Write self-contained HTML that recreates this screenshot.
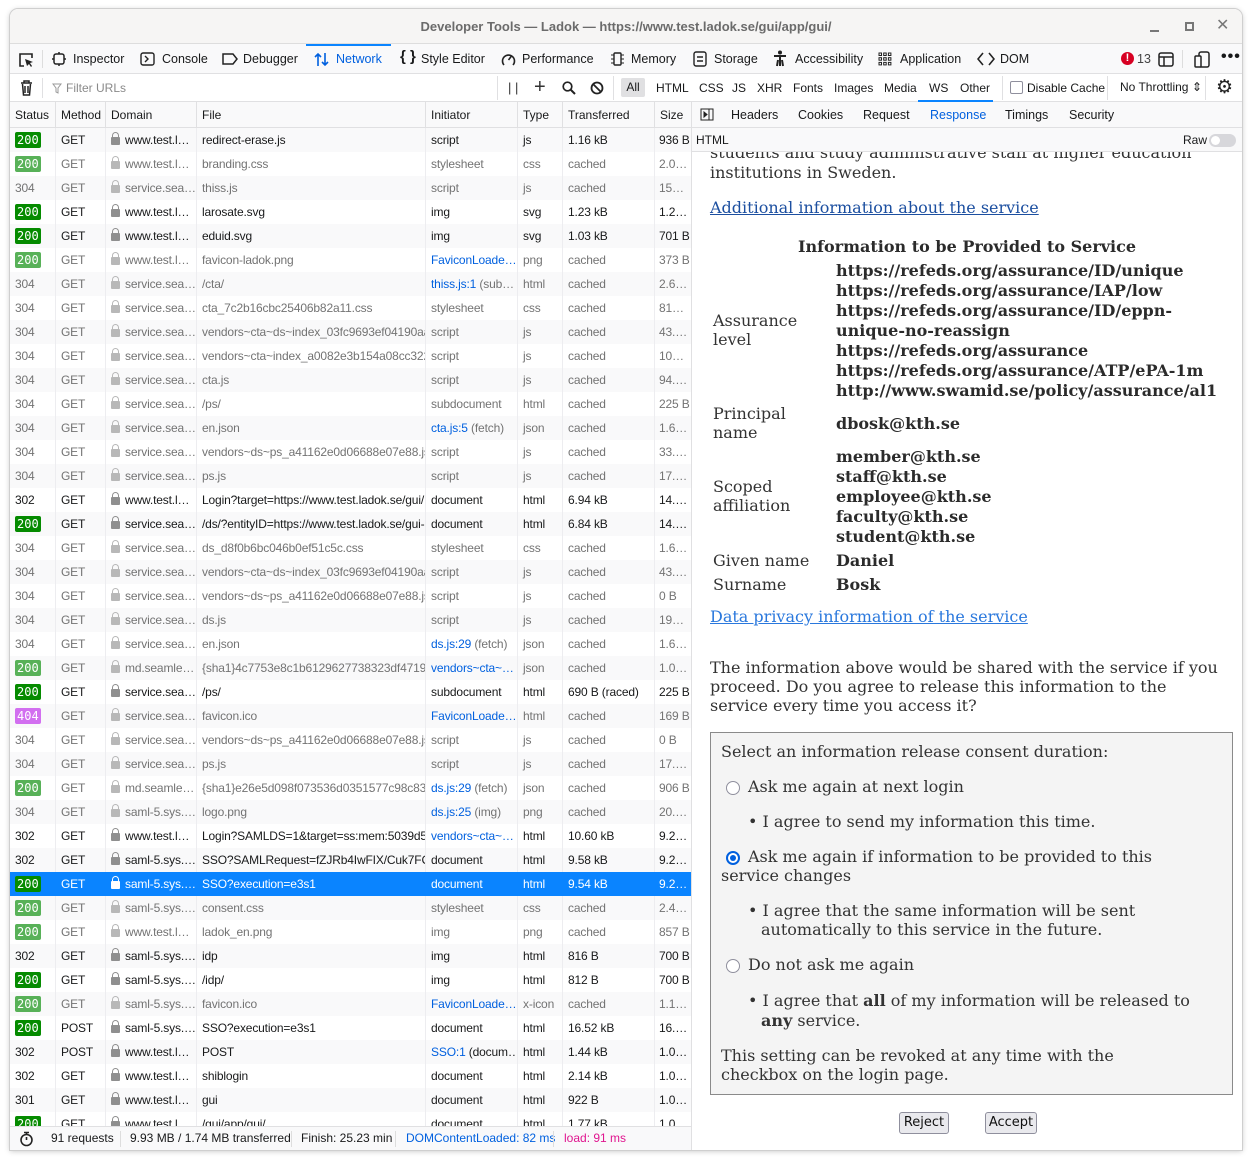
<!DOCTYPE html>
<html><head><meta charset="utf-8"><style>
*{box-sizing:border-box;margin:0;padding:0}
body{width:1252px;height:1160px;background:#fff;position:relative;overflow:hidden;font:12px "Liberation Sans","DejaVu Sans",sans-serif;color:#18191a}
.win{position:absolute;left:10px;top:9px;width:1232px;height:1141px;border-radius:8px 8px 0 0;overflow:hidden;box-shadow:0 0 0 1px #cfcfcf,0 1px 6px rgba(0,0,0,.25);background:#fff}
.a{position:absolute;white-space:nowrap}
.title{left:0;top:0;width:1232px;height:35px;background:#f6f5f4;border-bottom:1px solid #ddd;text-align:center;line-height:35px;font-weight:bold;font-size:13px;color:#6b6b6b}
.tb{left:0;top:35px;width:1232px;height:30px;background:#f9f9fa;border-bottom:1px solid #e0e0e2}
.fr{left:0;top:65px;width:1232px;height:28px;background:#fff;border-bottom:1px solid #e0e0e2}
.lbl{font-size:12.5px;color:#18191a;line-height:14px}
.ic{position:absolute}
.hdr{left:0;top:93px;width:681px;height:26px;background:#f9f9fa;border-bottom:1px solid #e0e0e2}
.hdr span{position:absolute;top:0;height:26px;line-height:26px;padding-left:5px;border-right:1px solid #e0e0e2}
.rows{position:absolute;left:0;top:119px;width:681px;height:998px;overflow:hidden;letter-spacing:-0.15px}
.r{height:24px;line-height:24px;display:flex;color:#18191a}
.r:nth-child(odd){background:#f9f9fa}
.r>span{overflow:hidden;white-space:nowrap;padding-left:5px;border-right:1px solid #ededf0;flex:none}
.r>span:nth-child(1){width:46px}.r>span:nth-child(2){width:50px}.r>span:nth-child(3){width:91px}.r>span:nth-child(4){width:229px}.r>span:nth-child(5){width:92px}.r>span:nth-child(6){width:45px}.r>span:nth-child(7){width:92px}.r>span:nth-child(8){width:36px;border:0;padding-left:4px}
.f{color:#737373}
.st{font:12px "DejaVu Sans Mono",monospace;padding:1px 2px;border-radius:2px;letter-spacing:0}
.g{background:#058b00;color:#fff}
.f .g{background:#58b158}
.p{background:#d26ff0;color:#fff}
.lk{display:inline-block;width:9px;height:8px;background:#8f8f8f;border-radius:1px;position:relative;margin-right:5px;vertical-align:-1px}
.lk:before{content:"";position:absolute;left:1px;top:-5px;width:7px;height:7px;border:1.5px solid #8f8f8f;border-bottom:0;border-radius:4px 4px 0 0;box-sizing:border-box;background:none}
.f .lk{background:#b8b8b8}.f .lk:before{border-color:#b8b8b8}
.bl{color:#0060df}
.sel{background:#0a84ff!important;color:#fff}
.sel>span{border-color:#0a84ff}
.sel .lk{background:#fff}.sel .lk:before{border-color:#fff}
.sb{left:0;top:1117px;width:681px;height:24px;background:#f9f9fa;border-top:1px solid #e0e0e2;line-height:23px;color:#18191a}
.rp{position:absolute;left:681px;top:93px;width:551px;height:1048px;border-left:1px solid #e0e0e2;background:#fff}
.rt{left:0;top:0;width:551px;height:26px;background:#f9f9fa;border-bottom:1px solid #e0e0e2;line-height:26px;font-size:12.5px}
.rh{left:0;top:26px;width:551px;height:24px;background:#f9f9fa;border-bottom:1px solid #e0e0e2;line-height:24px}
.ct{position:absolute;left:0;top:50px;width:551px;height:998px;overflow:hidden}
.l{position:absolute;white-space:nowrap;line-height:20px;font:16px "DejaVu Serif",serif;color:#333}
.bd{font-weight:bold;color:#2b2b2b}
.lnk{color:#1c4fa0;text-decoration:underline}
.box{position:absolute;left:18px;top:580px;width:523px;height:363px;background:#f4f4f4;border:1px solid #8a8a8a}
.rad{position:absolute;width:14px;height:14px;border:1.5px solid #8f8f9d;border-radius:50%;background:#fff}
.rad.on{border:2px solid #0060df}
.rad.on:after{content:"";position:absolute;left:2px;top:2px;width:6px;height:6px;border-radius:50%;background:#0060df}
.btn{position:absolute;height:22px;border:1px solid #8f8f9d;border-radius:3px;background:#e9e9ed;font:13px "DejaVu Sans",sans-serif;line-height:20px;text-align:center;color:#111}
</style></head><body>
<div class="win">
<div class="a title">Developer Tools — Ladok — https://www.test.ladok.se/gui/app/gui/</div>
<div class="a" style="left:1140px;top:21px;width:9px;height:2px;background:#777"></div>
<div class="a" style="left:1175px;top:13px;width:9px;height:9px;border:2px solid #777"></div>
<div class="a" style="left:1206px;top:6px;font-size:16px;color:#777">✕</div>

<div class="a tb">
<svg class="ic" style="left:8px;top:8px" width="16" height="16" viewBox="0 0 16 16"><path d="M6 14H2V2h12v4" fill="none" stroke="#222" stroke-width="1.6"/><path d="M7 7l8 3-3 1 2 3-1 1-2-3-2 2z" fill="#222"/></svg>
<div class="a" style="left:32px;top:6px;width:1px;height:18px;background:#ddd"></div>
<svg class="ic" style="left:42px;top:8px" width="14" height="14"><rect x="2" y="2" width="10" height="10" rx="2" fill="none" stroke="#222" stroke-width="1.5"/><path d="M7 0v2M7 12v2M0 7h2M12 7h2" stroke="#222" stroke-width="1.5"/></svg>
<div class="a lbl" style="left:63px;top:8px">Inspector</div>
<svg class="ic" style="left:130px;top:8px" width="15" height="14"><rect x="1" y="1" width="13" height="12" rx="2" fill="none" stroke="#222" stroke-width="1.4"/><path d="M5 4l3 3-3 3" fill="none" stroke="#222" stroke-width="1.4"/></svg>
<div class="a lbl" style="left:152px;top:8px">Console</div>
<svg class="ic" style="left:212px;top:8px" width="16" height="14"><path d="M1 2h10l4 5-4 5H1z" fill="none" stroke="#222" stroke-width="1.5"/></svg>
<div class="a lbl" style="left:233px;top:8px">Debugger</div>
<div class="a" style="left:296px;top:0;width:85px;height:2px;background:#0a84ff"></div>
<svg class="ic" style="left:304px;top:8px" width="16" height="15"><path d="M4 14V2M1 5l3-3 3 3M11 1v12M8 10l3 3 3-3" fill="none" stroke="#0060df" stroke-width="1.6"/></svg>
<div class="a lbl" style="left:326px;top:8px;color:#0060df">Network</div>
<div class="a lbl" style="left:390px;top:6px;font-size:15px;font-weight:bold">{ }</div>
<div class="a lbl" style="left:411px;top:8px">Style Editor</div>
<svg class="ic" style="left:491px;top:8px" width="15" height="14"><path d="M3 13A6 6 0 1 1 12 13" fill="none" stroke="#222" stroke-width="1.6"/><path d="M7.5 8l3-4" stroke="#222" stroke-width="1.6"/></svg>
<div class="a lbl" style="left:512px;top:8px">Performance</div>
<svg class="ic" style="left:600px;top:7px" width="15" height="16"><rect x="4" y="2" width="7" height="12" rx="1" fill="none" stroke="#222" stroke-width="1.4"/><path d="M1 4h3M1 8h3M1 12h3M11 4h3M11 8h3M11 12h3" stroke="#222"/></svg>
<div class="a lbl" style="left:621px;top:8px">Memory</div>
<svg class="ic" style="left:683px;top:7px" width="14" height="16"><rect x="1" y="1" width="12" height="14" rx="2" fill="none" stroke="#222" stroke-width="1.4"/><path d="M4 6h6M4 10h6" stroke="#222" stroke-width="1.4"/></svg>
<div class="a lbl" style="left:704px;top:8px">Storage</div>
<svg class="ic" style="left:763px;top:6px" width="14" height="17"><circle cx="7" cy="2.5" r="2" fill="#222"/><path d="M1 6h12M7 6v10M4 16l1-6M10 16l-1-6" stroke="#222" stroke-width="2"/></svg>
<div class="a lbl" style="left:785px;top:8px">Accessibility</div>
<svg class="ic" style="left:868px;top:8px" width="14" height="14" fill="none" stroke="#222"><rect x="1" y="1" width="2.5" height="2.5"/><rect x="5.7" y="1" width="2.5" height="2.5"/><rect x="10.4" y="1" width="2.5" height="2.5"/><rect x="1" y="5.7" width="2.5" height="2.5"/><rect x="5.7" y="5.7" width="2.5" height="2.5"/><rect x="10.4" y="5.7" width="2.5" height="2.5"/><rect x="1" y="10.4" width="2.5" height="2.5"/><rect x="5.7" y="10.4" width="2.5" height="2.5"/><rect x="10.4" y="10.4" width="2.5" height="2.5"/></svg>
<div class="a lbl" style="left:890px;top:8px">Application</div>
<svg class="ic" style="left:967px;top:7px" width="18" height="16"><path d="M6 2L1 8l5 6M12 2l5 6-5 6" fill="none" stroke="#222" stroke-width="1.6"/></svg>
<div class="a lbl" style="left:990px;top:8px">DOM</div>
<div class="a" style="left:1111px;top:8px;width:13px;height:13px;border-radius:50%;background:#d70022;color:#fff;font-size:11px;font-weight:bold;text-align:center;line-height:13px">!</div>
<div class="a lbl" style="left:1127px;top:8px;color:#444">13</div>
<svg class="ic" style="left:1148px;top:8px" width="16" height="15"><rect x="1" y="1" width="14" height="13" rx="2" fill="none" stroke="#222" stroke-width="1.5"/><path d="M1 5h14M6 5v9" stroke="#222" stroke-width="1.5"/></svg>
<div class="a" style="left:1172px;top:6px;width:1px;height:18px;background:#ddd"></div>
<svg class="ic" style="left:1184px;top:7px" width="16" height="17"><rect x="5" y="1" width="10" height="15" rx="2" fill="none" stroke="#222" stroke-width="1.5"/><rect x="1" y="5" width="6" height="11" rx="1" fill="#f9f9fa" stroke="#222" stroke-width="1.5"/></svg>
<div class="a" style="left:1211px;top:4px;font-size:16px;font-weight:bold;letter-spacing:1px">•••</div>
</div>

<div class="a fr">
<svg class="ic" style="left:10px;top:6px" width="13" height="16"><path d="M1 3h11M4 3V1h5v2M2.5 4l1 11h6l1-11M5 6v7M8 6v7" fill="none" stroke="#222" stroke-width="1.5"/></svg>
<div class="a" style="left:32px;top:4px;width:1px;height:20px;background:#e0e0e2"></div>
<svg class="ic" style="left:42px;top:9px" width="10" height="11"><path d="M1 1h8L6 5v5L4 9V5z" fill="none" stroke="#999"/></svg>
<div class="a" style="left:56px;top:7px;color:#8a8a8a">Filter URLs</div>
<div class="a" style="left:487px;top:2px;width:1px;height:24px;background:#e0e0e2"></div>
<div class="a" style="left:498px;top:6px;color:#333;font-size:13px">| |</div>
<div class="a" style="left:524px;top:2px;font-size:20px;color:#333">+</div>
<svg class="ic" style="left:552px;top:7px" width="14" height="14"><circle cx="5.5" cy="5.5" r="4.3" fill="none" stroke="#222" stroke-width="1.7"/><path d="M8.5 8.5L13 13" stroke="#222" stroke-width="2"/></svg>
<svg class="ic" style="left:580px;top:7px" width="14" height="14"><circle cx="7" cy="7" r="5.5" fill="none" stroke="#222" stroke-width="1.8"/><path d="M3 3l8 8" stroke="#222" stroke-width="1.8"/></svg>
<div class="a" style="left:603px;top:2px;width:1px;height:24px;background:#e0e0e2"></div>
<div class="a" style="left:611px;top:4px;width:24px;height:19px;background:#e0e0e2;border-radius:2px;text-align:center;line-height:19px">All</div>
<div class="a" style="left:646px;top:7px">HTML</div>
<div class="a" style="left:689px;top:7px">CSS</div>
<div class="a" style="left:722px;top:7px">JS</div>
<div class="a" style="left:747px;top:7px">XHR</div>
<div class="a" style="left:783px;top:7px">Fonts</div>
<div class="a" style="left:824px;top:7px">Images</div>
<div class="a" style="left:874px;top:7px">Media</div>
<div class="a" style="left:919px;top:7px">WS</div>
<div class="a" style="left:950px;top:7px">Other</div>
<div class="a" style="left:908px;top:26px;width:75px;height:2px;background:#0a84ff"></div>
<div class="a" style="left:992px;top:2px;width:1px;height:24px;background:#e0e0e2"></div>
<div class="a" style="left:1000px;top:7px;width:13px;height:13px;border:1px solid #8f8f9d;border-radius:2px;background:#fff"></div>
<div class="a" style="left:1017px;top:7px">Disable Cache</div>
<div class="a" style="left:1097px;top:2px;width:1px;height:24px;background:#e0e0e2"></div>
<div class="a" style="left:1110px;top:6px">No Throttling ⇕</div>
<div class="a" style="left:1195px;top:2px;width:1px;height:24px;background:#e0e0e2"></div>
<div class="a" style="left:1206px;top:2px;font-size:19px;color:#222">⚙</div>
</div>

<div class="a hdr">
<span style="left:0;width:46px">Status</span><span style="left:46px;width:50px">Method</span><span style="left:96px;width:91px">Domain</span><span style="left:187px;width:229px">File</span><span style="left:416px;width:92px">Initiator</span><span style="left:508px;width:45px">Type</span><span style="left:553px;width:92px">Transferred</span><span style="left:645px;width:36px;border:0">Size</span>
</div>

<div class="rows">
<div class="r"><span><b class="st g">200</b></span><span>GET</span><span><i class="lk"></i>www.test.l…</span><span>redirect-erase.js</span><span>script</span><span>js</span><span>1.16 kB</span><span>936 B</span></div>
<div class="r f"><span><b class="st g">200</b></span><span>GET</span><span><i class="lk"></i>www.test.l…</span><span>branding.css</span><span>stylesheet</span><span>css</span><span>cached</span><span>2.0…</span></div>
<div class="r f"><span>304</span><span>GET</span><span><i class="lk"></i>service.sea…</span><span>thiss.js</span><span>script</span><span>js</span><span>cached</span><span>15…</span></div>
<div class="r"><span><b class="st g">200</b></span><span>GET</span><span><i class="lk"></i>www.test.l…</span><span>larosate.svg</span><span>img</span><span>svg</span><span>1.23 kB</span><span>1.2…</span></div>
<div class="r"><span><b class="st g">200</b></span><span>GET</span><span><i class="lk"></i>www.test.l…</span><span>eduid.svg</span><span>img</span><span>svg</span><span>1.03 kB</span><span>701 B</span></div>
<div class="r f"><span><b class="st g">200</b></span><span>GET</span><span><i class="lk"></i>www.test.l…</span><span>favicon-ladok.png</span><span class="bl">FaviconLoade…</span><span>png</span><span>cached</span><span>373 B</span></div>
<div class="r f"><span>304</span><span>GET</span><span><i class="lk"></i>service.sea…</span><span>/cta/</span><span><em class="bl" style="font-style:normal">thiss.js:1</em> (sub…</span><span>html</span><span>cached</span><span>2.6…</span></div>
<div class="r f"><span>304</span><span>GET</span><span><i class="lk"></i>service.sea…</span><span>cta_7c2b16cbc25406b82a11.css</span><span>stylesheet</span><span>css</span><span>cached</span><span>81…</span></div>
<div class="r f"><span>304</span><span>GET</span><span><i class="lk"></i>service.sea…</span><span>vendors~cta~ds~index_03fc9693ef04190aae</span><span>script</span><span>js</span><span>cached</span><span>43.…</span></div>
<div class="r f"><span>304</span><span>GET</span><span><i class="lk"></i>service.sea…</span><span>vendors~cta~index_a0082e3b154a08cc3222</span><span>script</span><span>js</span><span>cached</span><span>10…</span></div>
<div class="r f"><span>304</span><span>GET</span><span><i class="lk"></i>service.sea…</span><span>cta.js</span><span>script</span><span>js</span><span>cached</span><span>94.…</span></div>
<div class="r f"><span>304</span><span>GET</span><span><i class="lk"></i>service.sea…</span><span>/ps/</span><span>subdocument</span><span>html</span><span>cached</span><span>225 B</span></div>
<div class="r f"><span>304</span><span>GET</span><span><i class="lk"></i>service.sea…</span><span>en.json</span><span><em class="bl" style="font-style:normal">cta.js:5</em> (fetch)</span><span>json</span><span>cached</span><span>1.6…</span></div>
<div class="r f"><span>304</span><span>GET</span><span><i class="lk"></i>service.sea…</span><span>vendors~ds~ps_a41162e0d06688e07e88.js</span><span>script</span><span>js</span><span>cached</span><span>33.…</span></div>
<div class="r f"><span>304</span><span>GET</span><span><i class="lk"></i>service.sea…</span><span>ps.js</span><span>script</span><span>js</span><span>cached</span><span>17.…</span></div>
<div class="r"><span>302</span><span>GET</span><span><i class="lk"></i>www.test.l…</span><span>Login?target=https://www.test.ladok.se/gui/</span><span>document</span><span>html</span><span>6.94 kB</span><span>14.…</span></div>
<div class="r"><span><b class="st g">200</b></span><span>GET</span><span><i class="lk"></i>service.sea…</span><span>/ds/?entityID=https://www.test.ladok.se/gui-</span><span>document</span><span>html</span><span>6.84 kB</span><span>14.…</span></div>
<div class="r f"><span>304</span><span>GET</span><span><i class="lk"></i>service.sea…</span><span>ds_d8f0b6bc046b0ef51c5c.css</span><span>stylesheet</span><span>css</span><span>cached</span><span>1.6…</span></div>
<div class="r f"><span>304</span><span>GET</span><span><i class="lk"></i>service.sea…</span><span>vendors~cta~ds~index_03fc9693ef04190aae</span><span>script</span><span>js</span><span>cached</span><span>43.…</span></div>
<div class="r f"><span>304</span><span>GET</span><span><i class="lk"></i>service.sea…</span><span>vendors~ds~ps_a41162e0d06688e07e88.js</span><span>script</span><span>js</span><span>cached</span><span>0 B</span></div>
<div class="r f"><span>304</span><span>GET</span><span><i class="lk"></i>service.sea…</span><span>ds.js</span><span>script</span><span>js</span><span>cached</span><span>19…</span></div>
<div class="r f"><span>304</span><span>GET</span><span><i class="lk"></i>service.sea…</span><span>en.json</span><span><em class="bl" style="font-style:normal">ds.js:29</em> (fetch)</span><span>json</span><span>cached</span><span>1.6…</span></div>
<div class="r f"><span><b class="st g">200</b></span><span>GET</span><span><i class="lk"></i>md.seamle…</span><span>{sha1}4c7753e8c1b6129627738323df47194</span><span class="bl">vendors~cta~…</span><span>json</span><span>cached</span><span>1.0…</span></div>
<div class="r"><span><b class="st g">200</b></span><span>GET</span><span><i class="lk"></i>service.sea…</span><span>/ps/</span><span>subdocument</span><span>html</span><span>690 B (raced)</span><span>225 B</span></div>
<div class="r f"><span><b class="st p">404</b></span><span>GET</span><span><i class="lk"></i>service.sea…</span><span>favicon.ico</span><span class="bl">FaviconLoade…</span><span>html</span><span>cached</span><span>169 B</span></div>
<div class="r f"><span>304</span><span>GET</span><span><i class="lk"></i>service.sea…</span><span>vendors~ds~ps_a41162e0d06688e07e88.js</span><span>script</span><span>js</span><span>cached</span><span>0 B</span></div>
<div class="r f"><span>304</span><span>GET</span><span><i class="lk"></i>service.sea…</span><span>ps.js</span><span>script</span><span>js</span><span>cached</span><span>17.…</span></div>
<div class="r f"><span><b class="st g">200</b></span><span>GET</span><span><i class="lk"></i>md.seamle…</span><span>{sha1}e26e5d098f073536d0351577c98c8382</span><span><em class="bl" style="font-style:normal">ds.js:29</em> (fetch)</span><span>json</span><span>cached</span><span>906 B</span></div>
<div class="r f"><span>304</span><span>GET</span><span><i class="lk"></i>saml-5.sys.…</span><span>logo.png</span><span><em class="bl" style="font-style:normal">ds.js:25</em> (img)</span><span>png</span><span>cached</span><span>20.…</span></div>
<div class="r"><span>302</span><span>GET</span><span><i class="lk"></i>www.test.l…</span><span>Login?SAMLDS=1&amp;target=ss:mem:5039d56e</span><span class="bl">vendors~cta~…</span><span>html</span><span>10.60 kB</span><span>9.2…</span></div>
<div class="r"><span>302</span><span>GET</span><span><i class="lk"></i>saml-5.sys.…</span><span>SSO?SAMLRequest=fZJRb4IwFIX/Cuk7FCtsS</span><span>document</span><span>html</span><span>9.58 kB</span><span>9.2…</span></div>
<div class="r sel"><span><b class="st g">200</b></span><span>GET</span><span><i class="lk"></i>saml-5.sys.…</span><span>SSO?execution=e3s1</span><span>document</span><span>html</span><span>9.54 kB</span><span>9.2…</span></div>
<div class="r f"><span><b class="st g">200</b></span><span>GET</span><span><i class="lk"></i>saml-5.sys.…</span><span>consent.css</span><span>stylesheet</span><span>css</span><span>cached</span><span>2.4…</span></div>
<div class="r f"><span><b class="st g">200</b></span><span>GET</span><span><i class="lk"></i>www.test.l…</span><span>ladok_en.png</span><span>img</span><span>png</span><span>cached</span><span>857 B</span></div>
<div class="r"><span>302</span><span>GET</span><span><i class="lk"></i>saml-5.sys.…</span><span>idp</span><span>img</span><span>html</span><span>816 B</span><span>700 B</span></div>
<div class="r"><span><b class="st g">200</b></span><span>GET</span><span><i class="lk"></i>saml-5.sys.…</span><span>/idp/</span><span>img</span><span>html</span><span>812 B</span><span>700 B</span></div>
<div class="r f"><span><b class="st g">200</b></span><span>GET</span><span><i class="lk"></i>saml-5.sys.…</span><span>favicon.ico</span><span class="bl">FaviconLoade…</span><span>x-icon</span><span>cached</span><span>1.1…</span></div>
<div class="r"><span><b class="st g">200</b></span><span>POST</span><span><i class="lk"></i>saml-5.sys.…</span><span>SSO?execution=e3s1</span><span>document</span><span>html</span><span>16.52 kB</span><span>16.…</span></div>
<div class="r"><span>302</span><span>POST</span><span><i class="lk"></i>www.test.l…</span><span>POST</span><span><em class="bl" style="font-style:normal">SSO:1</em> (docum…</span><span>html</span><span>1.44 kB</span><span>1.0…</span></div>
<div class="r"><span>302</span><span>GET</span><span><i class="lk"></i>www.test.l…</span><span>shiblogin</span><span>document</span><span>html</span><span>2.14 kB</span><span>1.0…</span></div>
<div class="r"><span>301</span><span>GET</span><span><i class="lk"></i>www.test.l…</span><span>gui</span><span>document</span><span>html</span><span>922 B</span><span>1.0…</span></div>
<div class="r"><span><b class="st g">200</b></span><span>GET</span><span><i class="lk"></i>www.test.l…</span><span>/gui/app/gui/</span><span>document</span><span>html</span><span>1.77 kB</span><span>1.0…</span></div>
</div>

<div class="a sb">
<svg class="ic" style="left:9px;top:4px" width="15" height="16"><circle cx="7.5" cy="9" r="5.5" fill="none" stroke="#222" stroke-width="1.6"/><path d="M5 1.5h5M7.5 2v2M7.5 9V6" stroke="#222" stroke-width="1.6"/></svg>
<span class="a" style="left:41px">91 requests</span>
<span class="a" style="left:110px;top:4px;width:1px;height:16px;background:#ddd"></span>
<span class="a" style="left:120px">9.93 MB / 1.74 MB transferred</span>
<span class="a" style="left:281px;top:4px;width:1px;height:16px;background:#ddd"></span>
<span class="a" style="left:291px">Finish: 25.23 min</span>
<span class="a" style="left:385px;top:4px;width:1px;height:16px;background:#ddd"></span>
<span class="a" style="left:396px;color:#0060df">DOMContentLoaded: 82 ms</span>
<span class="a" style="left:543px;top:4px;width:1px;height:16px;background:#ddd"></span>
<span class="a" style="left:554px;color:#e0158f">load: 91 ms</span>
</div>

<div class="rp">
<div class="a rt">
<svg class="ic" style="left:8px;top:6px" width="14" height="13"><rect x="1" y="1" width="12" height="11" fill="none" stroke="#222"/><path d="M9 1v11M4 4l3 2.5L4 9z" stroke="#222" fill="#222"/></svg>
<span class="a" style="left:39px">Headers</span>
<span class="a" style="left:106px">Cookies</span>
<span class="a" style="left:171px">Request</span>
<span class="a" style="left:238px;color:#0060df">Response</span>
<span class="a" style="left:313px">Timings</span>
<span class="a" style="left:377px">Security</span>
</div>
<div class="a rh"><span class="a" style="left:4px">HTML</span><span class="a" style="left:491px">Raw</span><span class="a" style="left:517px;top:6px;width:27px;height:13px;border-radius:7px;background:#d7d7db"></span><span class="a" style="left:519px;top:8px;width:9px;height:9px;border-radius:50%;background:#fff"></span></div>
<div class="ct">
<div class="l" style="left:18px;top:-9px">students and study administrative staff at higher education</div>
<div class="l" style="left:18px;top:11px">institutions in Sweden.</div>
<div class="l lnk" style="left:18px;top:46px">Additional information about the service</div>
<div class="l bd" style="left:106px;top:85px">Information to be Provided to Service</div>
<div class="l bd" style="left:144px;top:109px">https://refeds.org/assurance/ID/unique</div>
<div class="l bd" style="left:144px;top:129px">https://refeds.org/assurance/IAP/low</div>
<div class="l bd" style="left:144px;top:149px">https://refeds.org/assurance/ID/eppn-</div>
<div class="l bd" style="left:144px;top:169px">unique-no-reassign</div>
<div class="l bd" style="left:144px;top:189px">https://refeds.org/assurance</div>
<div class="l bd" style="left:144px;top:209px">https://refeds.org/assurance/ATP/ePA-1m</div>
<div class="l bd" style="left:144px;top:229px">http://www.swamid.se/policy/assurance/al1</div>
<div class="l" style="left:21px;top:159px">Assurance</div>
<div class="l" style="left:21px;top:178px">level</div>
<div class="l" style="left:21px;top:252px">Principal</div>
<div class="l" style="left:21px;top:271px">name</div>
<div class="l bd" style="left:144px;top:262px">dbosk@kth.se</div>
<div class="l bd" style="left:144px;top:295px">member@kth.se</div>
<div class="l bd" style="left:144px;top:315px">staff@kth.se</div>
<div class="l bd" style="left:144px;top:335px">employee@kth.se</div>
<div class="l bd" style="left:144px;top:355px">faculty@kth.se</div>
<div class="l bd" style="left:144px;top:375px">student@kth.se</div>
<div class="l" style="left:21px;top:325px">Scoped</div>
<div class="l" style="left:21px;top:344px">affiliation</div>
<div class="l" style="left:21px;top:399px">Given name</div>
<div class="l bd" style="left:144px;top:399px">Daniel</div>
<div class="l" style="left:21px;top:423px">Surname</div>
<div class="l bd" style="left:144px;top:423px">Bosk</div>
<div class="l lnk" style="left:18px;top:455px;color:#2a78dd">Data privacy information of the service</div>
<div class="l" style="left:18px;top:506px">The information above would be shared with the service if you</div>
<div class="l" style="left:18px;top:525px">proceed. Do you agree to release this information to the</div>
<div class="l" style="left:18px;top:544px">service every time you access it?</div>
<div class="box"></div>
<div class="l" style="left:29px;top:590px">Select an information release consent duration:</div>
<div class="rad" style="left:34px;top:629px"></div>
<div class="l" style="left:56px;top:625px">Ask me again at next login</div>
<div class="l" style="left:56px;top:660px">• I agree to send my information this time.</div>
<div class="rad on" style="left:34px;top:699px"></div>
<div class="l" style="left:56px;top:695px">Ask me again if information to be provided to this</div>
<div class="l" style="left:29px;top:714px">service changes</div>
<div class="l" style="left:56px;top:749px">• I agree that the same information will be sent</div>
<div class="l" style="left:69px;top:768px">automatically to this service in the future.</div>
<div class="rad" style="left:34px;top:807px"></div>
<div class="l" style="left:56px;top:803px">Do not ask me again</div>
<div class="l" style="left:56px;top:839px">• I agree that <b>all</b> of my information will be released to</div>
<div class="l" style="left:69px;top:859px"><b>any</b> service.</div>
<div class="l" style="left:29px;top:894px">This setting can be revoked at any time with the</div>
<div class="l" style="left:29px;top:913px">checkbox on the login page.</div>
<div class="btn" style="left:207px;top:960px;width:50px">Reject</div>
<div class="btn" style="left:293px;top:960px;width:52px">Accept</div>
</div>
</div>
</div>
</body></html>
